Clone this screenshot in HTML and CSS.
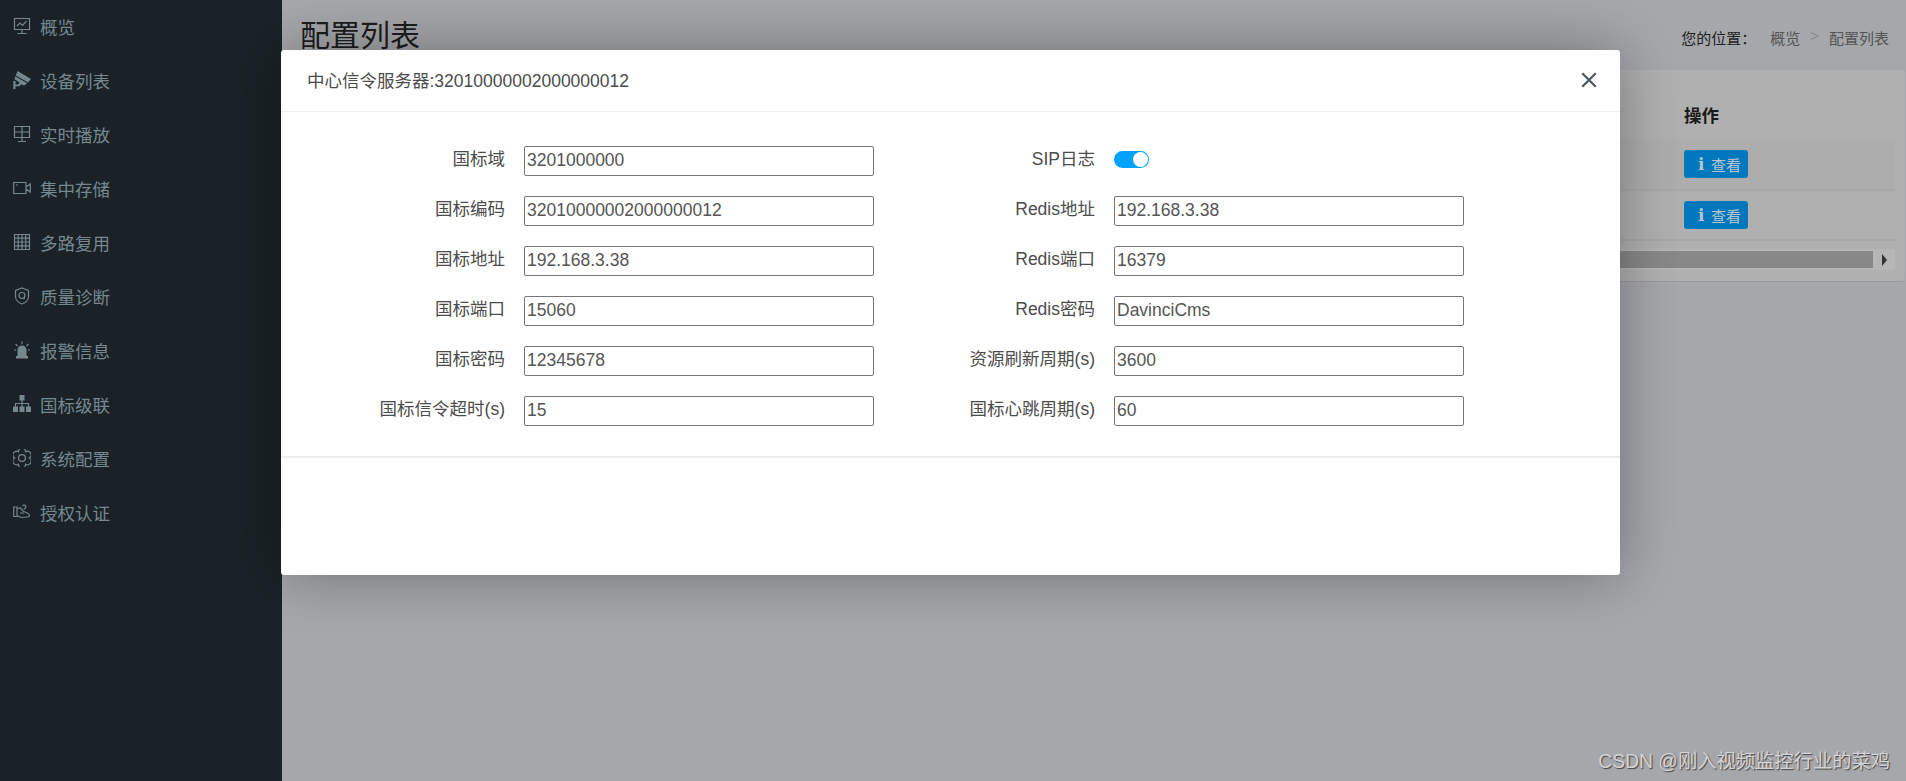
FILE: index.html
```html
<!DOCTYPE html>
<html>
<head>
	<meta charset="utf-8">
	<title>配置列表</title>
	<link rel="stylesheet" href="styles.css">
</head>
<body>
	<div class="layout">
		<div class="sidebar">
			<a class="nav-item">
				<svg class="nav-icon" viewBox="0 0 18 18"><path class="line" d="M1.500 1.500h15v11h-15zM9 12.500v4M4.500 16.500h9M4 9l3-3 2.500 2.500 4-4.500"/></svg>
				<span>概览</span>
			</a>
			<a class="nav-item">
				<svg class="nav-icon" viewBox="0 0 18 18"><path class="fill" d="M4.500 0L18 8l-3 3.500L2.800 4.500zM2.200 5.200l12 7-3 2.300-3-1.200-1.700 2H2.500V18H.3V10h2.200v3.500h2.800l1.300-2-5-3.300z"/></svg>
				<span>设备列表</span>
			</a>
			<a class="nav-item">
				<svg class="nav-icon" viewBox="0 0 18 18"><path class="line" d="M1.500 1.500h15v11h-15zM9 1.500v15M1.500 7h15M5 16.500h8"/></svg>
				<span>实时播放</span>
			</a>
			<a class="nav-item">
				<svg class="nav-icon" viewBox="0 0 18 18"><path class="line" d="M.7 3.500h12.300v11H.7zM13 8l4.300-3v8L13 10M3 6h2"/></svg>
				<span>集中存储</span>
			</a>
			<a class="nav-item">
				<svg class="nav-icon" viewBox="0 0 18 18"><path class="line" d="M1.500 1.500h15v15h-15zM1.500 5.200h15M1.500 9h15M1.500 12.800h15M5.200 1.500v15M9 1.500v15M12.800 1.500v15"/></svg>
				<span>多路复用</span>
			</a>
			<a class="nav-item">
				<svg class="nav-icon" viewBox="0 0 18 18"><path class="line" d="M9 1l6.500 2.500v6c0 3.500-3 6.500-6.500 7.500-3.500-1-6.500-4-6.500-7.500v-6z"/><circle class="line" cx="9" cy="8.500" r="3"/><path class="line" d="M10.500 11l1 1"/></svg>
				<span>质量诊断</span>
			</a>
			<a class="nav-item">
				<svg class="nav-icon" viewBox="0 0 18 18"><path class="fill" d="M4.500 9a4.500 4.500 0 0 1 9 0v6h-9zM3 15h12v2.500H3z"/><path class="line" d="M9 .3v3M2.500 3l2 2M15.500 3l-2 2M1 9h2M15 9h2"/></svg>
				<span>报警信息</span>
			</a>
			<a class="nav-item">
				<svg class="nav-icon" viewBox="0 0 18 18"><path class="fill" d="M6.500 0h5v5.500h-5zM0 11.500h5V17H0zM6.500 11.500h5V17h-5zM13 11.500h5V17h-5z"/><path class="line" d="M9 5v7M2.500 12V8.500h13V12"/></svg>
				<span>国标级联</span>
			</a>
			<a class="nav-item">
				<svg class="nav-icon" viewBox="0 0 18 18"><path class="line" d="M16.300 9A3.600 3.600 0 0 1 12.600 15.300 3.600 3.600 0 0 1 5.400 15.300 3.600 3.600 0 0 1 1.700 9 3.600 3.600 0 0 1 5.400 2.700 3.600 3.600 0 0 1 12.600 2.700 3.600 3.600 0 0 1 16.300 9z"/><circle class="line" cx="9" cy="9" r="3.400"/></svg>
				<span>系统配置</span>
			</a>
			<a class="nav-item">
				<svg class="nav-icon" viewBox="0 0 18 18"><path class="line" d="M.7 4h3.300v9.500H.7zM4 5.500l3.500-.5 2.500 3 5 2.500c2.300 1.200 1.700 3.300-.5 3.500L8 14.500 4 12.500M9.500 3a2 2 0 0 1 3.200 0c1 1.500-1 2.500-2 3.500M7 10h4"/></svg>
				<span>授权认证</span>
			</a>
		</div>
		<div class="main">
			<div class="page-head">
				<h1 class="page-title">配置列表</h1>
				<div class="crumbs">
					<span class="crumb-label">您的位置：</span>
					<span>概览</span>
					<span class="crumb-sep">&gt;</span>
					<span>配置列表</span>
				</div>
			</div>
			<div class="panel">
				<div class="table-row table-head"><b>操作</b></div>
				<div class="table-row striped"><button class="btn-view"><i class="btn-i">i</i>查看</button></div>
				<div class="table-row short"><button class="btn-view"><i class="btn-i">i</i>查看</button></div>
				<div class="scrollbar">
					<div class="scroll-thumb"></div>
					<div class="scroll-arrow"></div>
				</div>
			</div>
		</div>
	</div>

	<div class="modal">
		<div class="modal-header">
			<span class="modal-title">中心信令服务器:32010000002000000012</span>
			<svg class="modal-close" viewBox="0 0 16 16"><path d="M2 2l12 12M14 2L2 14"/></svg>
		</div>
		<div class="modal-body">
			<div class="field"><label>国标域</label><input type="text" value="3201000000"></div>
			<div class="field"><label>SIP日志</label><span class="switch"><span class="knob"></span></span></div>
			<div class="field"><label>国标编码</label><input type="text" value="32010000002000000012"></div>
			<div class="field"><label>Redis地址</label><input type="text" value="192.168.3.38"></div>
			<div class="field"><label>国标地址</label><input type="text" value="192.168.3.38"></div>
			<div class="field"><label>Redis端口</label><input type="text" value="16379"></div>
			<div class="field"><label>国标端口</label><input type="text" value="15060"></div>
			<div class="field"><label>Redis密码</label><input type="text" value="DavinciCms"></div>
			<div class="field"><label>国标密码</label><input type="text" value="12345678"></div>
			<div class="field"><label>资源刷新周期(s)</label><input type="text" value="3600"></div>
			<div class="field"><label>国标信令超时(s)</label><input type="text" value="15"></div>
			<div class="field"><label>国标心跳周期(s)</label><input type="text" value="60"></div>
		</div>
		<div class="modal-footer"></div>
	</div>

	<div class="watermark">CSDN @刚入视频监控行业的菜鸡</div>
</body>
</html>
```

FILE: styles.css
```css
html, body {
	height: 100%;
	margin: 0;
	overflow: hidden;
}

body {
	background: #a6a7ab;
	color: #1c1c1c;
	font-family: "Liberation Sans", "Noto Sans CJK SC", sans-serif;
	font-size: 17.5px;
}

.layout {
	display: flex;
	height: 100%;
}

.sidebar {
	width: 282px;
	flex: none;
	background: #1a2227;
}

.nav-item {
	display: flex;
	align-items: center;
	gap: 9px;
	height: 54px;
	padding-left: 13px;
	color: #75878f;
}

.nav-item span {
	margin-top: -2px;
}

.nav-icon {
	width: 18px;
	height: 18px;
	margin-top: -2px;
}

.line {
	fill: none;
	stroke: #75878f;
	stroke-width: 1.2;
}

.fill {
	fill: #75878f;
}

.main {
	flex: 1;
	min-width: 0;
}

.page-head {
	display: flex;
	justify-content: space-between;
	align-items: center;
	height: 70px;
	padding: 0 17px 0 18px;
	box-sizing: border-box;
}

.page-title {
	margin: -4px 0 0;
	font-size: 30px;
	font-weight: 400;
	color: #1d1d1d;
}

.crumbs {
	display: flex;
	gap: 10px;
	margin-top: 4px;
	font-size: 15px;
	color: #555;
}

.crumb-label {
	width: 79px;
	color: #222;
}

.crumb-sep {
	color: #8a8a8a;
}

.panel {
	height: 212px;
	margin: 0 1px 0 17px;
	padding-right: 10px;
	box-sizing: border-box;
	background: #b0b0b0;
	border-radius: 4px;
	border-bottom: 1px solid #9a9a9a;
}

.table-row {
	display: flex;
	align-items: center;
	height: 50px;
	padding-left: 1385px;
	border-bottom: 2px solid #a8a8a8;
}

.table-head {
	height: 50px;
	padding-top: 19px;
	border: 0;
	color: #1a1a1a;
}

.striped {
	background: #adadad;
}

.short {
	height: 48px;
}

.btn-view {
	display: flex;
	align-items: center;
	width: 64px;
	height: 28px;
	padding: 0 0 0 14px;
	border: 0;
	border-radius: 3px;
	background: #0078be;
	color: #b8c4cc;
	font-family: inherit;
	font-size: 15px;
}

.btn-i {
	width: 13px;
	font-family: "DejaVu Serif", serif;
	font-size: 17px;
	font-style: normal;
	font-weight: 700;
	text-align: left;
}

.scrollbar {
	display: flex;
	align-items: center;
	height: 21px;
	margin-top: 8px;
	background: #b6b6b6;
}

.scroll-thumb {
	flex: 1;
	height: 17px;
	background: #888;
}

.scroll-arrow {
	width: 22px;
	height: 10px;
	position: relative;
}

.scroll-arrow::after {
	content: "";
	position: absolute;
	left: 9px;
	top: -1px;
	border-style: solid;
	border-width: 6px 0 6px 5px;
	border-color: transparent transparent transparent #333;
}

.modal {
	position: absolute;
	left: 281px;
	top: 50px;
	width: 1339px;
	height: 525px;
	background: #fff;
	border-radius: 3px;
	box-shadow: 0 0 60px rgba(0, 0, 0, 0.33);
	color: #4c4c4c;
}

.modal-header {
	display: flex;
	justify-content: space-between;
	align-items: center;
	height: 61px;
	padding: 0 22px 0 26px;
	border-bottom: 1px solid #eceeef;
}

.modal-title {
	margin-top: -2px;
}

.modal-close {
	width: 18px;
	height: 18px;
	margin-top: -2px;
}

.modal-close path {
	fill: none;
	stroke: #50555e;
	stroke-width: 2;
}

.modal-body {
	display: grid;
	grid-template-columns: 570px 570px;
	column-gap: 20px;
	row-gap: 20px;
	padding: 34px 0 30px 24px;
	border-bottom: 2px solid #eeeeef;
}

.field {
	display: flex;
	align-items: center;
	gap: 19px;
	height: 30px;
}

.field label {
	width: 200px;
	flex: none;
	text-align: right;
	margin-top: -7px;
}

.field input {
	width: 350px;
	height: 30px;
	box-sizing: border-box;
	padding: 0 2px 2px;
	border: 1px solid #767676;
	border-radius: 2px;
	font-family: inherit;
	font-size: 17.5px;
	color: #555;
}

.switch {
	display: block;
	position: relative;
	width: 35px;
	height: 17px;
	margin-top: -3px;
	border-radius: 9px;
	background: #00a2ff;
}

.knob {
	position: absolute;
	right: 1px;
	top: 1px;
	width: 15px;
	height: 15px;
	border-radius: 50%;
	background: #fff;
}

.watermark {
	position: absolute;
	right: 16px;
	bottom: 7px;
	font-size: 19.3px;
	color: #d4d4d6;
	text-shadow: 1px 1px 1px #444;
}
```
